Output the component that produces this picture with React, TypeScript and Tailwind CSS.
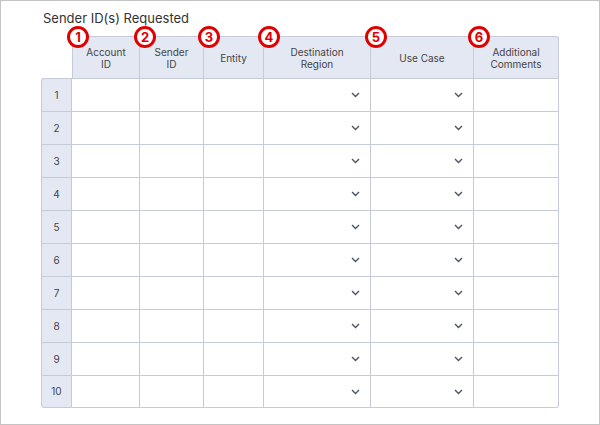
const cols = [
  { label: ['Account', 'ID'], w: 'w-[68px]', select: false },
  { label: ['Sender', 'ID'], w: 'w-[64px]', select: false },
  { label: ['Entity'], w: 'w-[60px]', select: false },
  { label: ['Destination', 'Region'], w: 'w-[107px]', select: true },
  { label: ['Use Case'], w: 'w-[103px]', select: true },
  { label: ['Additional', 'Comments'], w: 'w-[85px]', select: false },
]

function Chevron() {
  return (
    <svg width="9" height="6" viewBox="0 0 9 6" className="ml-auto mr-[10px]">
      <path d="M1 1l3.5 3.5L8 1" fill="none" stroke="#4b5563" strokeWidth="1.4" />
    </svg>
  )
}

function Badge({ n }: { n: number }) {
  return (
    <div className="absolute -left-[6px] -top-[11px] w-[22px] h-[22px] rounded-full border-[3px] border-[#e00000] bg-white flex items-center justify-center text-[13px] font-bold text-[#e00000] leading-none">
      {n}
    </div>
  )
}

export default function App() {
  return (
    <div className="w-[600px] h-[425px] border border-[#c4c4c4] bg-white font-[Inter,sans-serif] box-border">
      <div className="pl-[42px] pt-[8px] text-[13px] text-[#333] leading-[18px]">Sender ID(s) Requested</div>
      <div className="pl-[40px] pt-[9px]">
        <table className="border-separate border-spacing-0 text-[10px] text-[#444]">
          <thead>
            <tr>
              <th className="w-[31px] p-0"></th>
              {cols.map((c, i) => (
                <th
                  key={i}
                  className={`${c.w} h-[42px] p-0 relative font-normal bg-[#e4e8f3] border-t border-r border-[#c5cbd8] leading-[12px] ${i === 0 ? 'border-l' : ''} ${i === 5 ? 'rounded-tr-[3px]' : ''}`}
                >
                  <Badge n={i + 1} />
                  {c.label.map((l) => (
                    <div key={l} className="leading-[12px]">{l}</div>
                  ))}
                </th>
              ))}
            </tr>
          </thead>
          <tbody>
            {Array.from({ length: 10 }, (_, r) => (
              <tr key={r}>
                <td className={`h-[33px] p-0 text-center bg-[#e4e8f3] border-l border-t border-r border-[#c5cbd8] ${r === 0 ? 'rounded-tl-[3px]' : ''} ${r === 9 ? 'border-b rounded-bl-[3px]' : ''}`}>
                  {r + 1}
                </td>
                {cols.map((c, i) => (
                  <td key={i} className={`p-0 border-t border-r border-[#c5cbd8] ${r === 9 ? 'border-b' : ''} ${r === 9 && i === 5 ? 'rounded-br-[3px]' : ''}`}>
                    {c.select && (
                      <div className="flex items-center">
                        <Chevron />
                      </div>
                    )}
                  </td>
                ))}
              </tr>
            ))}
          </tbody>
        </table>
      </div>
    </div>
  )
}
